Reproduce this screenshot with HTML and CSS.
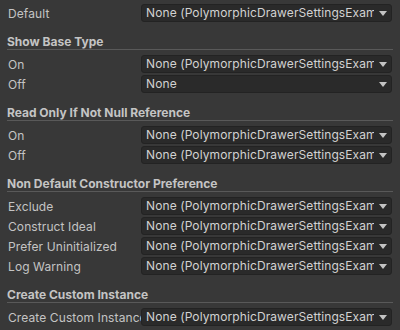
FILE: index.html
```
<!DOCTYPE html>
<html lang="en">

<head>
    <meta charset="UTF-8" />
    <title>Polymorphic Drawer Settings</title>
    <link rel="stylesheet" href="styles.css">
</head>

<body>
    <div class="inspector">
        <div class="row">
            <span class="label">Default</span>
            <div class="field"><span class="value">None (PolymorphicDrawerSettingsExample)</span><svg class="arrow" width="8" height="5" viewBox="0 0 8 5"><path d="M0 0h8L4 5z" /></svg></div>
        </div>

        <div class="header">Show Base Type</div>
        <div class="row">
            <span class="label">On</span>
            <div class="field"><span class="value">None (PolymorphicDrawerSettingsExample)</span><svg class="arrow" width="8" height="5" viewBox="0 0 8 5"><path d="M0 0h8L4 5z" /></svg></div>
        </div>
        <div class="row">
            <span class="label">Off</span>
            <div class="field"><span class="value">None</span><svg class="arrow" width="8" height="5" viewBox="0 0 8 5"><path d="M0 0h8L4 5z" /></svg></div>
        </div>

        <div class="header">Read Only If Not Null Reference</div>
        <div class="row">
            <span class="label">On</span>
            <div class="field"><span class="value">None (PolymorphicDrawerSettingsExample)</span><svg class="arrow" width="8" height="5" viewBox="0 0 8 5"><path d="M0 0h8L4 5z" /></svg></div>
        </div>
        <div class="row">
            <span class="label">Off</span>
            <div class="field"><span class="value">None (PolymorphicDrawerSettingsExample)</span><svg class="arrow" width="8" height="5" viewBox="0 0 8 5"><path d="M0 0h8L4 5z" /></svg></div>
        </div>

        <div class="header">Non Default Constructor Preference</div>
        <div class="row">
            <span class="label">Exclude</span>
            <div class="field"><span class="value">None (PolymorphicDrawerSettingsExample)</span><svg class="arrow" width="8" height="5" viewBox="0 0 8 5"><path d="M0 0h8L4 5z" /></svg></div>
        </div>
        <div class="row">
            <span class="label">Construct Ideal</span>
            <div class="field"><span class="value">None (PolymorphicDrawerSettingsExample)</span><svg class="arrow" width="8" height="5" viewBox="0 0 8 5"><path d="M0 0h8L4 5z" /></svg></div>
        </div>
        <div class="row">
            <span class="label">Prefer Uninitialized</span>
            <div class="field"><span class="value">None (PolymorphicDrawerSettingsExample)</span><svg class="arrow" width="8" height="5" viewBox="0 0 8 5"><path d="M0 0h8L4 5z" /></svg></div>
        </div>
        <div class="row">
            <span class="label">Log Warning</span>
            <div class="field"><span class="value">None (PolymorphicDrawerSettingsExample)</span><svg class="arrow" width="8" height="5" viewBox="0 0 8 5"><path d="M0 0h8L4 5z" /></svg></div>
        </div>

        <div class="header">Create Custom Instance</div>
        <div class="row">
            <span class="label">Create Custom Instance</span>
            <div class="field"><span class="value">None (PolymorphicDrawerSettingsExample)</span><svg class="arrow" width="8" height="5" viewBox="0 0 8 5"><path d="M0 0h8L4 5z" /></svg></div>
        </div>
    </div>
</body>

</html>
```

FILE: styles.css
```
* {
    box-sizing: border-box;
}

body {
    margin: 0;
    background-color: #383838;
    font-family: Inter, "Noto Sans", sans-serif;
    font-size: 12px;
    color: #c4c4c4;
    height: 330px;
    overflow: hidden;
}

.inspector {
    padding: 4px 7px 0 7px;
}

.row {
    display: flex;
    align-items: center;
    height: 18px;
    margin-bottom: 2px;
    letter-spacing: 0.1px;
}

.label {
    width: 134px;
    padding-left: 1px;
    white-space: nowrap;
    overflow: hidden;
    flex-shrink: 0;
}

.field {
    flex: 1;
    min-width: 0;
    height: 18px;
    margin-right: 1px;
    display: flex;
    align-items: center;
    background-color: #2a2a2a;
    border: 1px solid #232323;
    border-radius: 3px;
    padding: 0 0 0 4px;
    color: #d2d2d2;
}

.value {
    flex: 1;
    min-width: 0;
    white-space: nowrap;
    overflow: hidden;
    line-height: 16px;
    margin-right: 5px;
}

.arrow {
    fill: #c4c4c4;
    margin-right: 4px;
    flex-shrink: 0;
}

.header {
    height: 26px;
    padding-top: 11px;
    line-height: 14px;
    font-weight: bold;
    border-bottom: 1px solid #595959;
    margin-bottom: 5px;
}
```
